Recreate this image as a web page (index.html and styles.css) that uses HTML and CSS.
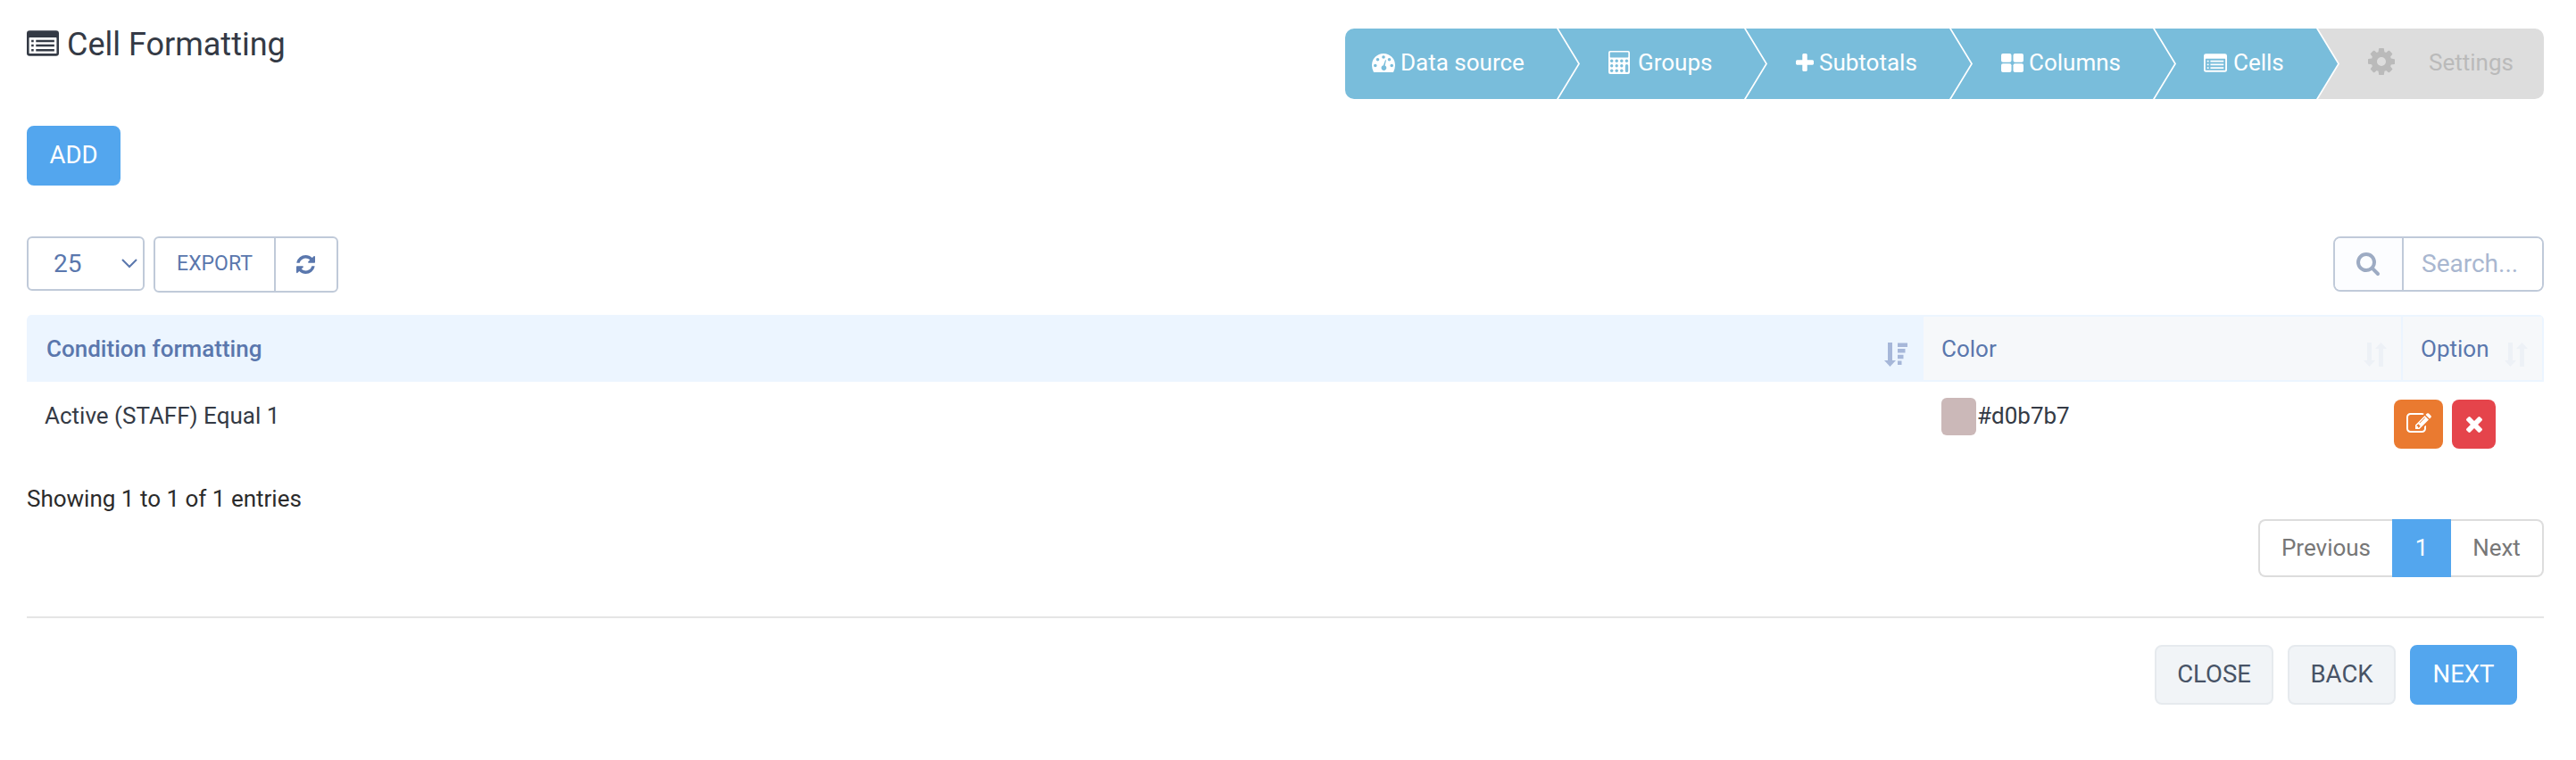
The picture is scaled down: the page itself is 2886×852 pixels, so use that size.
FILE: index.html
```html
<!DOCTYPE html>
<html lang="en">
<head>
    <meta charset="UTF-8">
    <meta name="viewport" content="width=device-width, initial-scale=1.0">
    <title>Cell Formatting</title>
    <link rel="stylesheet" href="styles.css">
</head>
<body>
    <!-- icons used more than once -->
    <svg class="sprite" width="0" height="0">
        <symbol id="list-alt" viewBox="0 0 1792 1408">
            <path fill-rule="evenodd" d="M160 0h1472q160 0 160 160v1088q0 160-160 160h-1472q-160 0-160-160v-1088q0-160 160-160zM160 384q-32 0-32 32v832q0 32 32 32h1472q32 0 32-32v-832q0-32-32-32z"/>
            <path d="M256 512h128v128h-128zM512 512h1024v128h-1024zM256 768h128v128h-128zM512 768h1024v128h-1024zM256 1024h128v128h-128zM512 1024h1024v128h-1024z"/>
        </symbol>
        <symbol id="sort" viewBox="0 0 26 27">
            <path d="M4 0h5v20h4l-6.500 7-6.500-7h4zM17 27h5v-20h4l-6.500-7-6.500 7h4z"/>
        </symbol>
    </svg>

    <div class="container">
        <div class="header">
            <h2><svg class="title-icon"><use href="#list-alt"/></svg>Cell Formatting</h2>
            <div class="steps">
                <div class="step data-source">
                    <svg width="26" height="21" viewBox="0 0 26 21"><path fill-rule="evenodd" d="M2 21Q0 17 0 13A13 13 0 0 1 26 13Q26 17 24 21ZM2 13.500a1.800 1.800 0 1 0 3.600 0a1.800 1.800 0 1 0-3.600 0M4.700 6.800a1.800 1.800 0 1 0 3.600 0a1.800 1.800 0 1 0-3.600 0M11.200 4a1.800 1.800 0 1 0 3.600 0a1.800 1.800 0 1 0-3.600 0M17.700 6.800a1.800 1.800 0 1 0 3.600 0a1.800 1.800 0 1 0-3.600 0M20.400 13.500a1.800 1.800 0 1 0 3.600 0a1.800 1.800 0 1 0-3.600 0M15 7.200L16 7.500L14.600 13.400A2.900 2.900 0 1 1 12.900 13.200Z"/></svg>Data source
                </div>
                <div class="step groups">
                    <svg width="24" height="26" viewBox="0 0 24 26"><path fill-rule="evenodd" d="M2 0h20q2 0 2 2v22q0 2-2 2h-20q-2 0-2-2v-22q0-2 2-2zM2.500 1.500q-.8 0-.8.8v4.500q0 .6.8.6h19q.8 0 .8-.6v-4.500q0-.8-.8-.8zM20.500 15q-1.700 0-1.700 1.500v6q0 1.600 1.700 1.600t1.700-1.600v-6q0-1.500-1.700-1.500z"/><g class="keys"><circle cx="3.700" cy="11.200" r="1.700"/><circle cx="9.200" cy="11.200" r="1.700"/><circle cx="14.800" cy="11.200" r="1.700"/><circle cx="20.400" cy="11.200" r="1.700"/><circle cx="3.700" cy="16.700" r="1.700"/><circle cx="9.200" cy="16.700" r="1.700"/><circle cx="14.800" cy="16.700" r="1.700"/><circle cx="3.700" cy="22.300" r="1.700"/><circle cx="9.200" cy="22.300" r="1.700"/><circle cx="14.800" cy="22.300" r="1.700"/></g></svg>Groups
                </div>
                <div class="step subtotals">
                    <svg width="20" height="20" viewBox="192 128 1408 1408"><path d="M1600 736v192q0 40-28 68t-68 28h-416v416q0 40-28 68t-68 28h-192q-40 0-68-28t-28-68v-416h-416q-40 0-68-28t-28-68v-192q0-40 28-68t68-28h416v-416q0-40 28-68t68-28h192q40 0 68 28t28 68v416h416q40 0 68 28t28 68z"/></svg>Subtotals
                </div>
                <div class="step columns">
                    <svg width="25" height="21" viewBox="0 0 25 21"><rect width="11.500" height="9.700" rx="2"/><rect x="13.500" width="11.500" height="9.700" rx="2"/><rect y="11.300" width="11.500" height="9.700" rx="2"/><rect x="13.500" y="11.300" width="11.500" height="9.700" rx="2"/></svg>Columns
                </div>
                <div class="step cells">
                    <svg width="26" height="21"><use href="#list-alt"/></svg>Cells
                </div>
                <div class="step settings">
                    <svg width="30" height="30" viewBox="128 128 1536 1536"><path d="M1152 896q0-106-75-181t-181-75-181 75-75 181 75 181 181 75 181-75 75-181zm512-109v222q0 12-8 23t-20 13l-185 28q-19 54-39 91 35 50 107 138 10 12 10 25t-9 23q-27 37-99 108t-94 71q-12 0-26-9l-138-108q-44 23-91 38-16 136-29 186-7 28-36 28h-222q-14 0-24.500-8.500t-11.500-21.500l-28-184q-49-16-90-37l-141 107q-10 9-25 9-14 0-25-11-126-114-165-168-7-10-7-23 0-12 8-23 15-21 51-66.500t54-70.500q-27-50-41-99l-183-27q-13-2-21-12.500t-8-23.500v-222q0-12 8-23t19-13l186-28q14-46 39-92-40-57-107-138-10-12-10-24 0-10 9-23 26-36 98.500-107.500t94.500-71.500q13 0 26 10l138 107q44-23 91-38 16-136 29-186 7-28 36-28h222q14 0 24.500 8.500t11.500 21.500l28 184q49 16 90 37l142-107q9-9 24-9 13 0 25 10 129 119 165 170 7 8 7 22 0 12-8 23-15 21-51 66.500t-54 70.500q26 50 41 98l183 28q13 2 21 12.500t8 23.500z"/></svg>Settings
                </div>
            </div>
        </div>

        <button class="btn btn-primary btn-add">ADD</button>

        <div class="toolbar">
            <button class="page-size">25<svg width="18" height="11" viewBox="0 0 18 11"><path d="M1 1l8 8 8-8"/></svg></button>
            <div class="btn-group">
                <button class="export">EXPORT</button>
                <button class="refresh"><svg width="21" height="21" viewBox="128 128 1536 1536"><path d="M1639 1056q0 5-1 7-64 268-268 434.500t-478 166.500q-146 0-282.500-55t-243.500-157l-129 129q-19 19-45 19t-45-19-19-45v-448q0-26 19-45t45-19h448q26 0 45 19t19 45-19 45l-137 137q71 66 161 102t187 36q134 0 250-65t186-179q11-17 53-117 8-23 30-23h192q13 0 22.500 9.500t9.500 22.500zm25-800v448q0 26-19 45t-45 19h-448q-26 0-45-19t-19-45 19-45l138-138q-148-137-349-137-134 0-250 65t-186 179q-11 17-53 117-8 23-30 23h-199q-13 0-22.500-9.500t-9.500-22.500v-7q65-268 270-434.500t480-166.500q146 0 284 55.500t245 156.500l130-129q19-19 45-19t45 19 19 45z"/></svg></button>
            </div>
            <div class="search">
                <span class="search-icon"><svg width="26" height="26" viewBox="64 128 1664 1664"><path d="M1216 832q0-185-131.500-316.500t-316.500-131.500-316.500 131.500-131.500 316.500 131.500 316.500 316.500 131.500 316.500-131.500 131.500-316.500zm512 832q0 52-38 90t-90 38q-54 0-90-38l-343-342q-179 124-399 124-143 0-273.500-55.500t-225-150-150-225-55.500-273.500 55.500-273.500 150-225 225-150 273.500-55.500 273.500 55.500 225 150 150 225 55.500 273.500q0 220-124 399l343 343q37 37 37 90z"/></svg></span>
                <input type="text" placeholder="Search...">
            </div>
        </div>

        <div class="table">
            <div class="row head">
                <div class="cell sorted">Condition formatting<svg width="26" height="27" viewBox="0 0 26 27"><path d="M4 0h5v20h4l-6.500 7-6.500-7h4zM15 .5h11v4.500h-11zM15 7h8.500v4.500h-8.500zM15 13.700h6.500v4.500h-6.500zM15 20.500h4.500v4.500h-4.500z"/></svg></div>
                <div class="cell">Color<svg width="26" height="27"><use href="#sort"/></svg></div>
                <div class="cell">Option<svg width="26" height="27"><use href="#sort"/></svg></div>
            </div>
            <div class="row">
                <div class="cell">Active (STAFF) Equal 1</div>
                <div class="cell color"><span class="swatch"></span>#d0b7b7</div>
                <div class="cell options">
                    <button class="edit"><svg width="28" height="22" viewBox="0 128 1792 1408"><path d="M888 1184l116-116-152-152-116 116v56h96v96h56zm440-720q-16-16-33 1l-350 350q-17 17-1 33t33-1l350-350q17-17 1-33zm80 594v190q0 119-84.500 203.500t-203.500 84.500h-832q-119 0-203.500-84.500t-84.500-203.500v-832q0-119 84.500-203.500t203.500-84.500h832q63 0 117 25 15 7 18 23 3 17-9 29l-49 49q-14 14-32 8-23-6-45-6h-832q-66 0-113 47t-47 113v832q0 66 47 113t113 47h832q66 0 113-47t47-113v-126q0-13 9-22l64-64q15-15 35-7t20 29zm-96-738l288 288-672 672h-288v-288zm444 132l-92 92-288-288 92-92q28-28 68-28t68 28l152 152q28 28 28 68t-28 68z"/></svg></button>
                    <button class="delete"><svg width="18" height="18" viewBox="302 366 1188 1188"><path d="M1490 1322q0 40-28 68l-136 136q-28 28-68 28t-68-28l-294-294-294 294q-28 28-68 28t-68-28l-136-136q-28-28-28-68t28-68l294-294-294-294q-28-28-28-68t28-68l136-136q28-28 68-28t68 28l294 294 294-294q28-28 68-28t68 28l136 136q28 28 28 68t-28 68l-294 294 294 294q28 28 28 68z"/></svg></button>
                </div>
            </div>
        </div>

        <div class="info">Showing 1 to 1 of 1 entries</div>
        <div class="pagination">
            <button class="prev">Previous</button>
            <button class="active">1</button>
            <button class="next">Next</button>
        </div>

        <div class="footer">
            <button class="btn btn-close">CLOSE</button>
            <button class="btn btn-back">BACK</button>
            <button class="btn btn-primary btn-next">NEXT</button>
        </div>
    </div>
</body>
</html>
```
FILE: styles.css
```css
* { box-sizing: border-box; }
body { margin: 0; background: #fff; color: #343a45; font: 26px/40px Roboto, sans-serif; }
button { margin: 0; padding: 0; border: 0; background: none; font: inherit; color: inherit; cursor: pointer; }
svg { display: block; flex: none; fill: currentColor; }
.sprite { position: absolute; }
.container { padding: 32px 36px 0 30px; }

.header { display: flex; justify-content: space-between; height: 79px; }
h2 { display: flex; margin: 0; font-size: 36px; font-weight: 400; line-height: 37px; }
.title-icon { width: 36px; height: 29px; margin: 2px 9px 0 0; }

/* wizard steps */
.steps { display: flex; height: 79px; border-radius: 10px; overflow: hidden; }
.step { display: flex; align-items: center; gap: 6px; margin-left: -22px; padding: 0 0 3px 56px; background: #79bddb; color: #fff; clip-path: polygon(0 0, calc(100% - 24px) 0, 100% 50%, calc(100% - 24px) 100%, 0 100%, 24px 50%); }
.data-source { width: 261px; margin-left: 0; padding-left: 30px; clip-path: polygon(0 0, calc(100% - 24px) 0, 100% 50%, calc(100% - 24px) 100%, 0 100%); }
.groups { width: 232px; gap: 9px; }
.subtotals { width: 252px; }
.columns { width: 250px; }
.cells { width: 205px; padding-left: 55px; gap: 7px; }
.settings { width: 253px; gap: 38px; background: #ddd; color: #bababa; clip-path: polygon(0 0, 100% 0, 100% 100%, 0 100%, 24px 50%); }
.settings svg { margin-top: -3px; }
.keys { fill: #79bddb; }

.btn { height: 67px; padding-bottom: 2px; border: 2px solid #e6eaee; border-radius: 8px; background: #f1f4f7; color: #475366; font-size: 27.5px; }
.btn-primary { background: #53a6ee; border-color: #53a6ee; color: #fff; }
.btn-add { display: block; width: 105px; margin-top: 30px; }

.toolbar { display: flex; align-items: flex-start; margin-top: 57px; height: 88px; color: #5a77ad; }
.page-size { display: flex; align-items: center; justify-content: space-between; width: 132px; height: 61px; margin-right: 10px; padding: 0 6px 0 28px; border: 2px solid #c0cad9; border-radius: 6px; font-size: 28px; }
.page-size svg { fill: none; stroke: #5a77ad; stroke-width: 2; }
.btn-group { display: flex; width: 207px; height: 63px; border: 2px solid #c0cad9; border-radius: 6px; }
.export { width: 135px; padding-bottom: 1px; border-right: 2px solid #c0cad9; font-size: 23px; }
.refresh { display: flex; flex: 1; align-items: center; justify-content: center; padding-right: 2px; }
.search { display: flex; width: 236px; height: 62px; margin-left: auto; border: 2px solid #c0cad9; border-radius: 8px; overflow: hidden; }
.search-icon { width: 77px; padding: 16px 0 0 24px; border-right: 2px solid #c0cad9; background: #fcfdff; color: #9dabc3; }
input { width: 155px; padding: 0 0 2px 20px; border: 0; outline: 0; font: 28px Roboto, sans-serif; }
input::placeholder { color: #a9b7d0; opacity: 1; }

.row { display: grid; grid-template-columns: 2125px 537px 158px; height: 75px; }
.cell { padding: 18px 0 0 20px; }
.head { border-radius: 6px 6px 0 0; overflow: hidden; color: #5a77ad; }
.head .cell { display: flex; justify-content: space-between; padding: 16px 16px 0 20px; background: #f6f8fa; border: solid #ecf5ff; border-width: 2px 2px 2px 0; }
.head svg { margin-top: 13px; color: #edf1f6; }
.head .sorted { background: #ecf5ff; padding-left: 22px; font-weight: 500; }
.head .sorted svg { color: #a6b7d9; }
.color { display: flex; }
.swatch { width: 39px; height: 42px; margin-right: 1px; border-radius: 6px; background: #cbb8b8; }
.options { display: flex; gap: 10px; padding: 20px 0 0; margin-left: -10px; }
.options button { display: flex; align-items: center; justify-content: center; width: 55px; height: 55px; border-radius: 8px; background: #ea7a30; color: #fff; }
.options .edit { padding-bottom: 4px; }
.options .delete { width: 49px; background: #e5444b; }

.info { margin-top: 36px; height: 43px; color: #2b2b2b; }
.pagination { display: flex; width: 320px; height: 65px; margin-left: auto; }
.pagination button { padding-bottom: 2px; border: 2px solid #ddd; color: #777; }
.pagination .prev { width: 150px; border-right: 0; border-radius: 8px 0 0 8px; }
.pagination .active { width: 66px; border-color: #53a6ee; background: #53a6ee; color: #fff; }
.pagination .next { width: 104px; border-left: 0; border-radius: 0 8px 8px 0; }

.footer { display: flex; justify-content: flex-end; gap: 16px; margin-top: 44px; padding: 30px 30px 0 0; border-top: 2px solid #e5e5e5; }
.btn-close { width: 133px; }
.btn-back { width: 121px; }
.btn-next { width: 120px; }
```
